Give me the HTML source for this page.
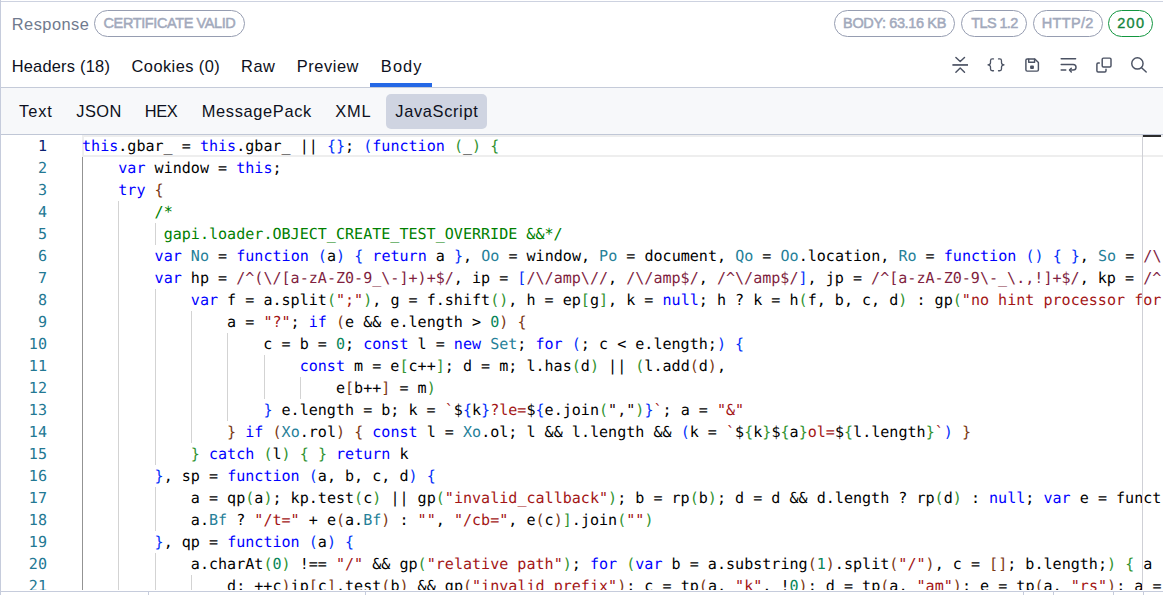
<!DOCTYPE html>
<html lang="en">
<head>
<meta charset="utf-8">
<title>Response</title>
<style>
*{box-sizing:border-box;margin:0;padding:0}
html,body{width:1163px;height:595px;overflow:hidden;background:#fff}
body{position:relative;font-family:"Liberation Sans",Arial,sans-serif;color:#10131f}
.abs{position:absolute}
#frame{position:absolute;left:0;top:0;width:1163px;height:595px;overflow:hidden;background:#fff}
#btop{left:1px;top:1px;width:1162px;height:1px;background:#cdd2e0}
#bleft{left:0;top:0;width:1px;height:595px;background:#c6ccdc}
.t{position:absolute;white-space:nowrap;font-size:16.4px;line-height:20px;color:#0d1020}
.t.hdr{top:14px;color:#707a8e}
.t.tab{top:56px}
.t.sub{top:101px}
.t.pt{top:13px;font-size:14.5px;font-weight:normal;color:#a2a9bc;-webkit-text-stroke:0.5px #a2a9bc}
.t.pt.grn{color:#14853c;-webkit-text-stroke:0.35px #14853c}
.pill{position:absolute;border:1px solid #969db1;border-radius:14px;height:27px;top:10px}
.pill.pg{border:1.2px solid #12963f}
#tabline{left:1px;top:87px;width:1162px;height:1px;background:#c5cbd9}
#uline{left:370px;top:83px;width:62px;height:4px;background:#2468e6}
#subbar{left:1px;top:88px;width:1162px;height:46px;background:#f7f8fa}
#subline{left:1px;top:134px;width:1162px;height:1px;background:#c0c7d6}
#jsp{left:386px;top:94px;width:101px;height:35px;border-radius:5px;background:#cfd4e1}
#ed{left:1px;top:135px;width:1162px;height:455px;overflow:hidden;background:#fff}
#curline{left:81px;top:0;width:1081px;height:22px;border:2px solid #eee;border-right:none}
#nums{left:0;top:0;width:46px}
.ln{height:22px;line-height:22px;text-align:right;color:#237893;font-family:"DejaVu Sans Mono", "Liberation Mono", monospace;font-size:15.073px;letter-spacing:0px;text-rendering:geometricPrecision}
.ln.cur{color:#0b216f}
#code{left:81px;top:0;width:1100px}
.cl{height:22px;line-height:22px;white-space:pre;color:#000;font-family:"DejaVu Sans Mono", "Liberation Mono", monospace;font-size:15.073px;letter-spacing:0px;text-rendering:geometricPrecision}
.g{position:absolute;width:1px;background:#d3d3d3}
.g.ga{background:#939393}
#guides{left:-1px;top:0;width:1px;height:1px}
#ovl{left:1141px;top:0;width:1px;height:455px;background:#cfd0d6}
#ovm{left:1142px;top:0;width:18px;height:2px;background:#2b2b2b}
#bot{left:1px;top:591px;width:1162px;height:1px;background:#c6ccdc}
.bv{position:absolute;top:592px;width:1px;height:3px;background:#c6ccdc}
</style>
</head>
<body>
<div id="frame">
  <div class="abs" id="btop"></div>
  <div class="abs" id="bleft"></div>

  <div class="pill" style="left:94px;width:151px"></div>
  <div class="pill" style="left:834px;width:121px"></div>
  <div class="pill" style="left:961px;width:66px"></div>
  <div class="pill" style="left:1033px;width:70px"></div>
  <div class="pill pg" style="left:1108px;width:45px"></div>
  <div class="abs" id="uline"></div>
  <div class="abs" id="tabline"></div>
  <div class="abs" id="subbar"></div>
  <div class="abs" id="subline"></div>
  <div class="abs" id="jsp"></div>
  <div class="t hdr" id="t-resp" style="left:11.78px;letter-spacing:0.463px">Response</div>
  <div class="t tab" id="t-h18" style="left:11.64px;letter-spacing:0.235px">Headers (18)</div>
  <div class="t tab" id="t-ck" style="left:131.56px;letter-spacing:0.440px">Cookies (0)</div>
  <div class="t tab" id="t-raw" style="left:241.12px;letter-spacing:0.493px">Raw</div>
  <div class="t tab" id="t-prev" style="left:296.86px;letter-spacing:0.544px">Preview</div>
  <div class="t tab" id="t-body" style="left:380.86px;letter-spacing:1.097px">Body</div>
  <div class="t sub" id="t-text" style="left:19.07px;letter-spacing:0.913px">Text</div>
  <div class="t sub" id="t-json" style="left:76.31px;letter-spacing:0.436px">JSON</div>
  <div class="t sub" id="t-hex" style="left:144.65px;letter-spacing:-0.293px">HEX</div>
  <div class="t sub" id="t-mp" style="left:201.66px;letter-spacing:0.670px">MessagePack</div>
  <div class="t sub" id="t-xml" style="left:335.24px;letter-spacing:0.821px">XML</div>
  <div class="t sub" id="t-js" style="left:395.30px;letter-spacing:0.655px">JavaScript</div>
  <div class="t pt" id="t-p1" style="left:103.56px;letter-spacing:-0.395px">CERTIFICATE VALID</div>
  <div class="t pt" id="t-p2" style="left:843.09px;letter-spacing:-0.368px">BODY: 63.16 KB</div>
  <div class="t pt" id="t-p3" style="left:971.21px;letter-spacing:-0.605px">TLS 1.2</div>
  <div class="t pt" id="t-p4" style="left:1041.74px;letter-spacing:0.348px">HTTP/2</div>
  <div class="t pt grn" id="t-p5" style="left:1117.29px;letter-spacing:1.270px">200</div>
  <svg class="abs" id="icons" style="left:945px;top:50px" width="218" height="30" viewBox="0 0 218 30">
    <g fill="none" stroke="#4b5263" stroke-width="1.45" stroke-linecap="round" stroke-linejoin="round">
      <path d="M7.4 14.95H23" stroke-linecap="butt" stroke-width="1.7"/>
      <path d="M10.9 7.5L15.2 11.6L19.5 7.5"/>
      <path d="M10.9 22.2L15.2 18.1L19.5 22.2"/>
      <path d="M48.5 8.95h-1.2q-1.8 0-1.8 1.8v1.9q0 1.8-2.5 2.2q2.5.4 2.5 2.2v1.9q0 1.8 1.8 1.8h1.2" stroke-width="1.3"/>
      <path d="M53.5 8.95h1.2q1.8 0 1.8 1.8v1.9q0 1.8 2.5 2.2q-2.5.4-2.5 2.2v1.9q0 1.8-1.8 1.8h-1.2" stroke-width="1.3"/>
      <path d="M82.2 9H89.8L93.4 12.5V19.8a1.3 1.3 0 0 1-1.3 1.3H82.2a1.3 1.3 0 0 1-1.3-1.3V10.3a1.3 1.3 0 0 1 1.3-1.3z"/>
      <path d="M83.7 9.2V12.3H89.6V9.2"/>
      <rect x="85.1" y="15.5" width="3.8" height="3.4" rx="0.9" fill="#4b5263" stroke="none"/>
      <path d="M116.2 8.8H130.6"/>
      <path d="M116.2 14.4H128.2a2.83 2.83 0 0 1 0 5.66H125"/>
      <path d="M126.3 18.2L124.5 20.05L126.3 21.9"/>
      <path d="M116.2 20.05H120.8"/>
      <rect x="157.2" y="8.1" width="8.8" height="8.8" rx="1.2"/>
      <path d="M154.3 13H153.1a1.2 1.2 0 0 0-1.2 1.2V20.8a1.2 1.2 0 0 0 1.2 1.2H159.8a1.2 1.2 0 0 0 1.2-1.2V19.2"/>
      <circle cx="192.4" cy="13.4" r="5.65"/>
      <path d="M196.6 17.7L201.2 22.1"/>
    </g>
  </svg>
  <div class="abs" id="ed">
    <div class="abs" id="curline"></div>
    <div class="abs" id="nums"><div class="ln cur">1</div><div class="ln">2</div><div class="ln">3</div><div class="ln">4</div><div class="ln">5</div><div class="ln">6</div><div class="ln">7</div><div class="ln">8</div><div class="ln">9</div><div class="ln">10</div><div class="ln">11</div><div class="ln">12</div><div class="ln">13</div><div class="ln">14</div><div class="ln">15</div><div class="ln">16</div><div class="ln">17</div><div class="ln">18</div><div class="ln">19</div><div class="ln">20</div><div class="ln">21</div></div>
    <div class="abs" id="guides"><i class="g ga" style="left:82px;top:22px;height:440px"></i><i class="g" style="left:118px;top:66px;height:396px"></i><i class="g" style="left:155px;top:88px;height:22px"></i><i class="g" style="left:155px;top:154px;height:176px"></i><i class="g" style="left:155px;top:352px;height:44px"></i><i class="g" style="left:155px;top:418px;height:44px"></i><i class="g" style="left:191px;top:176px;height:132px"></i><i class="g" style="left:191px;top:440px;height:22px"></i><i class="g" style="left:227px;top:198px;height:88px"></i><i class="g" style="left:264px;top:220px;height:44px"></i><i class="g" style="left:300px;top:242px;height:22px"></i></div>
    <div class="abs" id="code"><div class="cl"><span style="color:#0000ff">this</span>.gbar_ = <span style="color:#0000ff">this</span>.gbar_ || <span style="color:#0431fa">{</span><span style="color:#0431fa">}</span>; <span style="color:#0431fa">(</span><span style="color:#0000ff">function</span> <span style="color:#319331">(</span>_<span style="color:#319331">)</span> <span style="color:#319331">{</span></div><div class="cl">    <span style="color:#0000ff">var</span> window = <span style="color:#0000ff">this</span>;</div><div class="cl">    <span style="color:#0000ff">try</span> <span style="color:#7b3814">{</span></div><div class="cl">        <span style="color:#008000">/*</span></div><div class="cl">         <span style="color:#008000">gapi.loader.OBJECT_CREATE_TEST_OVERRIDE &amp;&amp;*/</span></div><div class="cl">        <span style="color:#0000ff">var</span> <span style="color:#267f99">No</span> = <span style="color:#0000ff">function</span> <span style="color:#0431fa">(</span>a<span style="color:#0431fa">)</span> <span style="color:#0431fa">{</span> <span style="color:#0000ff">return</span> a <span style="color:#0431fa">}</span>, <span style="color:#267f99">Oo</span> = window, <span style="color:#267f99">Po</span> = document, <span style="color:#267f99">Qo</span> = <span style="color:#267f99">Oo</span>.location, <span style="color:#267f99">Ro</span> = <span style="color:#0000ff">function</span> <span style="color:#0431fa">(</span><span style="color:#0431fa">)</span> <span style="color:#0431fa">{</span> <span style="color:#0431fa">}</span>, <span style="color:#267f99">So</span> = <span style="color:#811f3f">/\</span></div><div class="cl">        <span style="color:#0000ff">var</span> hp = <span style="color:#811f3f">/^(\/[a-zA-Z0-9_\-]+)+$/</span>, ip = <span style="color:#0431fa">[</span><span style="color:#811f3f">/\/amp\//</span>, <span style="color:#811f3f">/\/amp$/</span>, <span style="color:#811f3f">/^\/amp$/</span><span style="color:#0431fa">]</span>, jp = <span style="color:#811f3f">/^[a-zA-Z0-9\-_\.,!]+$/</span>, kp = <span style="color:#811f3f">/^</span></div><div class="cl">            <span style="color:#0000ff">var</span> f = a.split<span style="color:#319331">(</span><span style="color:#a31515">";"</span><span style="color:#319331">)</span>, g = f.shift<span style="color:#319331">(</span><span style="color:#319331">)</span>, h = ep<span style="color:#319331">[</span>g<span style="color:#319331">]</span>, k = <span style="color:#0000ff">null</span>; h ? k = h<span style="color:#319331">(</span>f, b, c, d<span style="color:#319331">)</span> : gp<span style="color:#319331">(</span><span style="color:#a31515">"no hint processor for</span></div><div class="cl">                a = <span style="color:#a31515">"?"</span>; <span style="color:#0000ff">if</span> <span style="color:#7b3814">(</span>e &amp;&amp; e.length &gt; <span style="color:#098658">0</span><span style="color:#7b3814">)</span> <span style="color:#7b3814">{</span></div><div class="cl">                    c = b = <span style="color:#098658">0</span>; <span style="color:#0000ff">const</span> l = <span style="color:#0000ff">new</span> <span style="color:#267f99">Set</span>; <span style="color:#0000ff">for</span> <span style="color:#0431fa">(</span>; c &lt; e.length;<span style="color:#0431fa">)</span> <span style="color:#0431fa">{</span></div><div class="cl">                        <span style="color:#0000ff">const</span> m = e<span style="color:#319331">[</span>c++<span style="color:#319331">]</span>; d = m; l.has<span style="color:#319331">(</span>d<span style="color:#319331">)</span> || <span style="color:#319331">(</span>l.add<span style="color:#7b3814">(</span>d<span style="color:#7b3814">)</span>,</div><div class="cl">                            e<span style="color:#7b3814">[</span>b++<span style="color:#7b3814">]</span> = m<span style="color:#319331">)</span></div><div class="cl">                    <span style="color:#0431fa">}</span> e.length = b; k = <span style="color:#a31515">`</span>$<span style="color:#0431fa">{</span>k<span style="color:#0431fa">}</span><span style="color:#a31515">?le=</span>$<span style="color:#0431fa">{</span>e.join<span style="color:#319331">(</span><span style="color:#1a0505">","</span><span style="color:#319331">)</span><span style="color:#0431fa">}</span><span style="color:#a31515">`</span>; a = <span style="color:#a31515">"&amp;"</span></div><div class="cl">                <span style="color:#7b3814">}</span> <span style="color:#0000ff">if</span> <span style="color:#7b3814">(</span><span style="color:#267f99">Xo</span>.rol<span style="color:#7b3814">)</span> <span style="color:#7b3814">{</span> <span style="color:#0000ff">const</span> l = <span style="color:#267f99">Xo</span>.ol; l &amp;&amp; l.length &amp;&amp; <span style="color:#0431fa">(</span>k = <span style="color:#a31515">`</span>$<span style="color:#319331">{</span>k<span style="color:#319331">}</span>$<span style="color:#319331">{</span>a<span style="color:#319331">}</span><span style="color:#a31515">ol=</span>$<span style="color:#319331">{</span>l.length<span style="color:#319331">}</span><span style="color:#a31515">`</span><span style="color:#0431fa">)</span> <span style="color:#7b3814">}</span></div><div class="cl">            <span style="color:#319331">}</span> <span style="color:#0000ff">catch</span> <span style="color:#319331">(</span>l<span style="color:#319331">)</span> <span style="color:#319331">{</span> <span style="color:#319331">}</span> <span style="color:#0000ff">return</span> k</div><div class="cl">        <span style="color:#0431fa">}</span>, sp = <span style="color:#0000ff">function</span> <span style="color:#0431fa">(</span>a, b, c, d<span style="color:#0431fa">)</span> <span style="color:#0431fa">{</span></div><div class="cl">            a = qp<span style="color:#319331">(</span>a<span style="color:#319331">)</span>; kp.test<span style="color:#319331">(</span>c<span style="color:#319331">)</span> || gp<span style="color:#319331">(</span><span style="color:#a31515">"invalid_callback"</span><span style="color:#319331">)</span>; b = rp<span style="color:#319331">(</span>b<span style="color:#319331">)</span>; d = d &amp;&amp; d.length ? rp<span style="color:#319331">(</span>d<span style="color:#319331">)</span> : <span style="color:#0000ff">null</span>; <span style="color:#0000ff">var</span> e = funct</div><div class="cl">            a.<span style="color:#267f99">Bf</span> ? <span style="color:#a31515">"/t="</span> + e<span style="color:#7b3814">(</span>a.<span style="color:#267f99">Bf</span><span style="color:#7b3814">)</span> : <span style="color:#a31515">""</span>, <span style="color:#a31515">"/cb="</span>, e<span style="color:#7b3814">(</span>c<span style="color:#7b3814">)</span><span style="color:#319331">]</span>.join<span style="color:#319331">(</span><span style="color:#a31515">""</span><span style="color:#319331">)</span></div><div class="cl">        <span style="color:#0431fa">}</span>, qp = <span style="color:#0000ff">function</span> <span style="color:#0431fa">(</span>a<span style="color:#0431fa">)</span> <span style="color:#0431fa">{</span></div><div class="cl">            a.charAt<span style="color:#319331">(</span><span style="color:#098658">0</span><span style="color:#319331">)</span> !== <span style="color:#a31515">"/"</span> &amp;&amp; gp<span style="color:#319331">(</span><span style="color:#a31515">"relative path"</span><span style="color:#319331">)</span>; <span style="color:#0000ff">for</span> <span style="color:#319331">(</span><span style="color:#0000ff">var</span> b = a.substring<span style="color:#7b3814">(</span><span style="color:#098658">1</span><span style="color:#7b3814">)</span>.split<span style="color:#7b3814">(</span><span style="color:#a31515">"/"</span><span style="color:#7b3814">)</span>, c = <span style="color:#7b3814">[</span><span style="color:#7b3814">]</span>; b.length;<span style="color:#319331">)</span> <span style="color:#319331">{</span> a </div><div class="cl">                d; ++c<span style="color:#7b3814">)</span>ip<span style="color:#7b3814">[</span>c<span style="color:#7b3814">]</span>.test<span style="color:#7b3814">(</span>b<span style="color:#7b3814">)</span> &amp;&amp; gp<span style="color:#7b3814">(</span><span style="color:#a31515">"invalid_prefix"</span><span style="color:#7b3814">)</span>; c = tp<span style="color:#7b3814">(</span>a, <span style="color:#a31515">"k"</span>, !<span style="color:#098658">0</span><span style="color:#7b3814">)</span>; d = tp<span style="color:#7b3814">(</span>a, <span style="color:#a31515">"am"</span><span style="color:#7b3814">)</span>; e = tp<span style="color:#7b3814">(</span>a, <span style="color:#a31515">"rs"</span><span style="color:#7b3814">)</span>; a =</div></div>
    <div class="abs" id="ovl"></div>
    <div class="abs" id="ovm"></div>
  </div>
  <div class="abs" id="bot"></div>
  <i class="bv" style="left:148px"></i><i class="bv" style="left:365px"></i><i class="bv" style="left:1023px"></i><i class="bv" style="left:1053px"></i><i class="bv" style="left:1113px"></i><i class="bv" style="left:1143px"></i>
</div>
</body>
</html>
